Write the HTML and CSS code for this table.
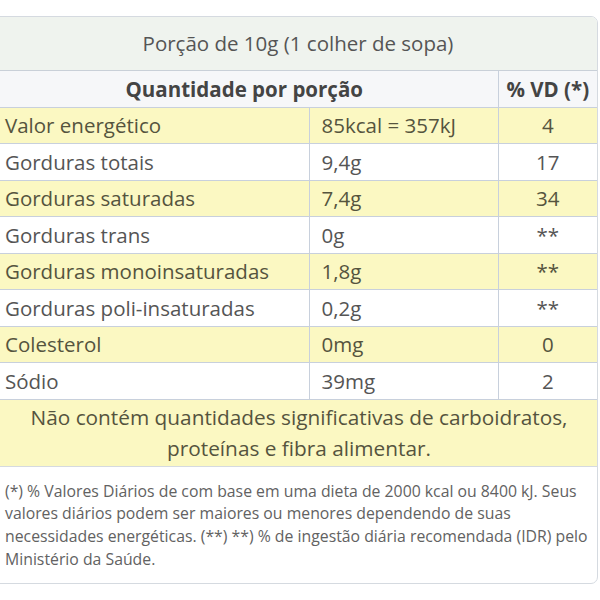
FILE: index.html
```html
<!DOCTYPE html>
<html lang="pt">
<head>
<meta charset="utf-8">
<link rel="stylesheet" href="styles.css">
</head>
<body>
<div class="box">
  <table class="nutri">
    <caption class="portion">Porção de 10g (1 colher de sopa)</caption>
    <colgroup>
      <col class="c-name">
      <col class="c-qty">
      <col class="c-vd">
    </colgroup>
    <thead>
      <tr class="head">
        <th colspan="2">Quantidade por porção</th>
        <th class="vd">% VD (*)</th>
      </tr>
    </thead>
    <tbody>
      <tr class="y"><td class="name">Valor energético</td><td class="qty">85kcal = 357kJ</td><td class="vd">4</td></tr>
      <tr><td class="name">Gorduras totais</td><td class="qty">9,4g</td><td class="vd">17</td></tr>
      <tr class="y"><td class="name">Gorduras saturadas</td><td class="qty">7,4g</td><td class="vd">34</td></tr>
      <tr><td class="name">Gorduras trans</td><td class="qty">0g</td><td class="vd">**</td></tr>
      <tr class="y"><td class="name">Gorduras monoinsaturadas</td><td class="qty">1,8g</td><td class="vd">**</td></tr>
      <tr><td class="name">Gorduras poli-insaturadas</td><td class="qty">0,2g</td><td class="vd">**</td></tr>
      <tr class="y"><td class="name">Colesterol</td><td class="qty">0mg</td><td class="vd">0</td></tr>
      <tr><td class="name">Sódio</td><td class="qty">39mg</td><td class="vd">2</td></tr>
      <tr class="y note"><td colspan="3">Não contém quantidades significativas de carboidratos,<br>proteínas e fibra alimentar.</td></tr>
    </tbody>
  </table>
  <p class="disclaimer">(*) % Valores Diários de com base em uma dieta de 2000 kcal ou 8400 kJ. Seus<br>valores diários podem ser maiores ou menores dependendo de suas<br>necessidades energéticas. (**) **) % de ingestão diária recomendada (IDR) pelo<br>Ministério da Saúde.</p>
</div>
</body>
</html>
```
FILE: styles.css
```css
html, body {
  margin: 0;
  padding: 0;
  background: #ffffff;
}
body {
  font-family: "Open Sans", "DejaVu Sans", sans-serif;
  color: #555555;
}
.box {
  margin: 16px 2px 0 -4px;
  border: 1px solid #d5dae0;
  border-radius: 0 7px 7px 0;
  overflow: hidden;
  background: #ffffff;
}
.nutri {
  width: 100%;
  border-collapse: collapse;
  table-layout: fixed;
}
.c-name { width: 312px; }
.c-qty { width: 189px; }
.portion {
  background: #eff3ee;
  font-size: 20.5px;
  color: #555555;
  height: 53px;
  line-height: 53px;
  text-align: center;
  border-bottom: 1px solid #c9d0d8;
  padding-left: 2px;
}
.nutri th, .nutri td {
  border: 1px solid #c8d0dc;
  border-left: none;
  font-size: 20.5px;
  font-weight: normal;
  padding: 0;
  height: 35.5px;
  line-height: 24px;
  color: #555555;
  white-space: nowrap;
}
.nutri tr > :last-child {
  border-right: none;
}
.head th {
  background: #f6f7f9;
  font-weight: bold;
  font-size: 20.5px;
  color: #444444;
  text-align: center;
  border-top: none;
}
.head th:first-child {
  padding-right: 6px;
}
.name {
  padding-left: 8px !important;
}
.qty {
  padding-left: 12px !important;
}
.nutri .vd {
  text-align: center;
}
.y td {
  background: #fbf8c2;
  color: #55543e;
}
.note td {
  text-align: center;
  line-height: 31px;
  height: 66px;
  border-bottom: none;
  font-size: 20.8px;
  padding-left: 4px !important;
}
.disclaimer {
  margin: 0;
  padding: 13px 4px 13px 8px;
  font-size: 15.8px;
  line-height: 22.7px;
  color: #626262;
  white-space: nowrap;
  border-top: 1px solid #d5dae0;
}
```
